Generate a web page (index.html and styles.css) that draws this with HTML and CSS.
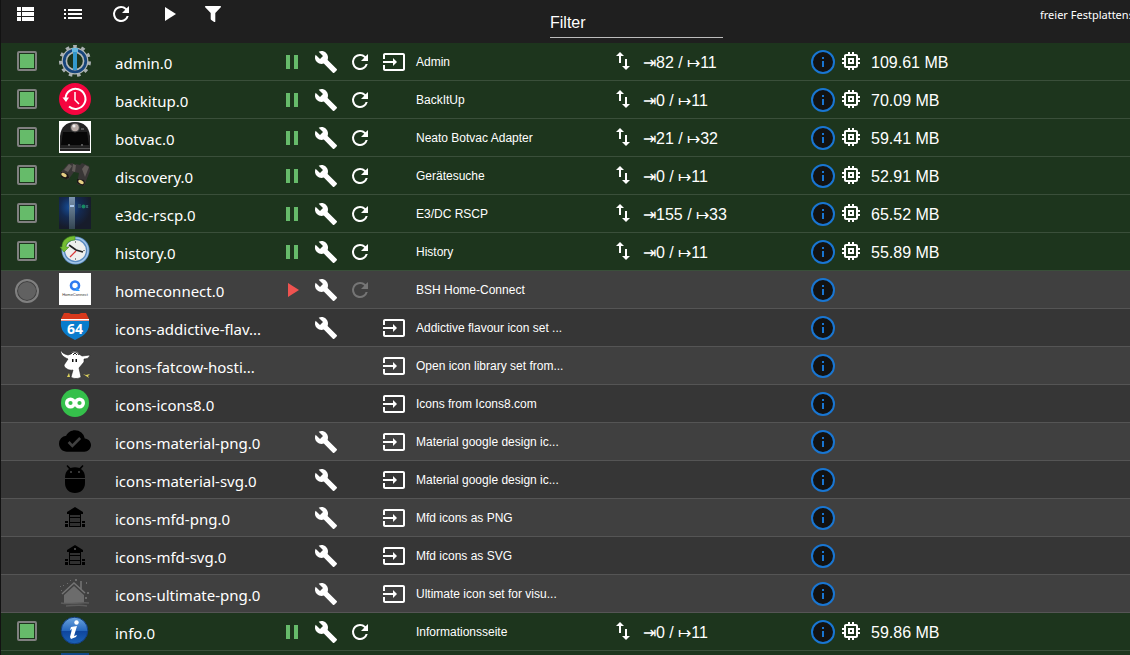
FILE: index.html
```html
<!DOCTYPE html>
<html lang="de">
<head>
  <meta charset="UTF-8">
  <meta name="viewport" content="width=device-width, initial-scale=1.0">
  <title>Instanzen</title>
  <link rel="stylesheet" href="styles.css">
</head>
<body>
  <!-- action icons -->
  <svg class="sprite" aria-hidden="true">
    <symbol id="view-list" viewBox="0 0 24 24"><path d="M4 14h4v-4H4zm0 5h4v-4H4zM4 9h4V5H4zm5 5h12v-4H9zm0 5h12v-4H9zM9 5v4h12V5z"/></symbol>
    <symbol id="list" viewBox="0 0 24 24"><path d="M3 13h2v-2H3zm0 4h2v-2H3zm0-8h2V7H3zm4 4h14v-2H7zm0 4h14v-2H7zM7 7v2h14V7z"/></symbol>
    <symbol id="refresh" viewBox="0 0 24 24"><path d="M17.65 6.35A7.96 7.96 0 0 0 12 4a8 8 0 1 0 7.73 10h-2.08A6 6 0 1 1 12 6c1.66 0 3.14.69 4.22 1.78L13 11h7V4z"/></symbol>
    <symbol id="play" viewBox="0 0 24 24"><path d="M8 5v14l11-7z"/></symbol>
    <symbol id="pause" viewBox="0 0 24 24"><path d="M6 19h4V5H6zm8-14v14h4V5z"/></symbol>
    <symbol id="filter" viewBox="0 0 24 24"><path d="M4.7 4h14.6c.7 0 1 .8.5 1.3L14.3 11v8.4c0 .6-.6.9-1.1.6l-2.900-2.100c-.4-.2-.6-.5-.6-.9v-6L4.200 5.300C3.700 4.800 4 4 4.700 4z"/></symbol>
    <symbol id="wrench" viewBox="0 0 24 24"><path d="m22.7 19-9.1-9.1c.9-2.300.4-5-1.500-6.900-2-2-5-2.400-7.400-1.300L9 6 6 9 1.600 4.700C.4 7.100.9 10.100 2.900 12.100c1.900 1.900 4.600 2.400 6.900 1.500l9.100 9.100c.4.4 1 .4 1.400 0l2.300-2.300c.5-.4.5-1.100.1-1.400z"/></symbol>
    <symbol id="enter" viewBox="0 0 24 24"><path d="M21 3.010H3c-1.100 0-2 .9-2 2V9h2V4.990h18v14.030H3V15H1v4.010c0 1.100.9 1.980 2 1.980h18c1.100 0 2-.88 2-1.980v-14c0-1.110-.9-2-2-2zM11 16l4-4-4-4v3H1v2h10z"/></symbol>
    <symbol id="updown" viewBox="0 0 24 24"><path d="M16 17.010V10h-2v7.010h-3L15 21l4-3.990zM9 3 5 6.990h3V14h2V6.990h3z"/></symbol>
    <symbol id="about" viewBox="0 0 24 24"><circle cx="12" cy="12" r="11" fill="#121212" stroke="#1976d2" stroke-width="2"/><path fill="#1976d2" d="M11 7h2v2h-2zm0 4h2v6h-2z"/></symbol>
    <symbol id="memory" viewBox="0 0 24 24"><path d="M15 9H9v6h6zm-2 4h-2v-2h2zm8-2V9h-2V7c0-1.100-.9-2-2-2h-2V3h-2v2h-2V3H9v2H7c-1.100 0-2 .9-2 2v2H3v2h2v2H3v2h2v2c0 1.100.9 2 2 2h2v2h2v-2h2v2h2v-2h2c1.100 0 2-.9 2-2v-2h2v-2h-2v-2zm-4 6H7V7h10z"/></symbol>
  </svg>

  <!-- adapter logos -->
  <svg class="defs" aria-hidden="true">
    <defs>
      <radialGradient id="glow" cx=".35" cy=".32" r=".65"><stop offset="0" stop-color="#164f9b"/><stop offset=".5" stop-color="#142a52"/><stop offset="1" stop-color="#171c2b"/></radialGradient>
      <linearGradient id="pillar" x2="0" y2="1"><stop offset="0" stop-color="#7a93ae"/><stop offset="1" stop-color="#344552"/></linearGradient>
      <linearGradient id="ball" x2="0" y2="1"><stop offset="0" stop-color="#6ba4df"/><stop offset=".5" stop-color="#2768bd"/><stop offset=".52" stop-color="#0e459e"/><stop offset="1" stop-color="#1c62b6"/></linearGradient>
    </defs>
    <symbol id="admin" viewBox="0 0 32 32">
      <circle cx="16" cy="16" r="14.5" fill="none" stroke="#aab0b2" stroke-width="3" stroke-dasharray="3.6 4.68" transform="rotate(-97 16 16)"/>
      <circle cx="16" cy="16" r="12.8" fill="#17457c" stroke="#b4b9ba" stroke-width="1.200"/>
      <circle cx="16" cy="16" r="8.600" fill="#1d351d" stroke="#b4b9ba" stroke-width="1.600"/>
      <path fill="#3399cc" d="M14 7h4v18h-4z"/><path fill="#65b9df" d="M13 3h6v4h-6z"/>
    </symbol>
    <symbol id="backitup" viewBox="0 0 32 32">
      <circle cx="16" cy="16" r="16" fill="#f5053f"/>
      <path fill="none" stroke="#fff" stroke-width="2" d="M6.500 15A10 10 0 1 1 10 23.500"/><path fill="none" stroke="#fff" stroke-width="1.500" d="M16 9v8l4 4"/><path fill="#fff" d="M3.500 14.500h6.500L7 19z"/>
    </symbol>
    <symbol id="botvac" viewBox="0 0 32 32">
      <path fill="#fff" d="M0 0h32v32H0z"/><path fill="#222" d="M1 30V15C2 6 7 1 16 1s14 5 15 14v15z"/>
      <path fill="#070707" d="M4 11h24l2 13H2z"/><circle cx="16" cy="6.500" r="5" fill="#444"/><circle cx="16" cy="6.500" r="3.800" fill="#b8aca6"/><circle cx="15" cy="5" r="1.500" fill="#eee"/>
      <path fill="#555" d="M1 27h30v1H1zM9 23h2v2H9zm13 0h2v2h-2zM22 7h3v2h-3z"/>
    </symbol>
    <symbol id="discovery" viewBox="0 0 32 32">
      <path fill="#393636" d="m1 14 8-9 5-1 2 5 1-4 4 1 2-2 7 3 1 5-6 15-7-2 2-11-5-1-6 8z"/>
      <path fill="#625c59" d="m5 11 5-6 3 2-4 6zm18-1 3-4 4 2-4 10zM14 5l3 1-1 7-3-1z"/>
      <path fill="#1a1717" d="m2 13 7 2 1 4-3 1-5-2zm16 7 7 1 1 3-2 3-6-3z"/>
      <ellipse cx="5" cy="16" rx="3" ry="1.800" fill="#e5cf84" transform="rotate(30 5 16)"/><ellipse cx="22" cy="23" rx="3" ry="1.800" fill="#e5cf84" transform="rotate(30 22 23)"/>
    </symbol>
    <symbol id="e3dc" viewBox="0 0 32 32">
      <path fill="url(#glow)" d="M0 0h32v32H0z"/><path fill="url(#pillar)" d="M10 0h6v32h-6z"/><path fill="#a9c8ee" d="M11 8h4v2h-4z"/>
      <path fill="none" stroke="#3a7074" d="M19 8h3m-3 2h3m5-2 2 3m0-3-2 3"/><circle cx="24.500" cy="9.500" r="2" fill="#168a62"/>
    </symbol>
    <symbol id="history" viewBox="0 0 32 32">
      <circle cx="16.500" cy="15.500" r="12.200" fill="#eeefed" stroke="#5a8bc0" stroke-width="3.600"/><circle cx="16.500" cy="15.500" r="12.500" fill="none" stroke="#a4c6e8" stroke-width="1.500"/>
      <path fill="#75bd32" stroke="#3f8b1e" stroke-width=".6" d="M16 1C8 1 3 5 3 12H1l4 5 5-5H7c0-4 4-7 9-7z"/>
      <path stroke="#888" d="M16.500 6v2m0 15v2M26 15.500h-2"/><path fill="none" stroke="#222" stroke-width="1.800" d="m10 10 7 5 7 2"/><path stroke="#d93636" stroke-width="1.200" d="m17 16-6 6"/>
    </symbol>
    <symbol id="homeconnect" viewBox="0 0 32 32">
      <path fill="#fff" d="M0 0h32v32H0z"/><circle cx="16" cy="12.500" r="4" fill="none" stroke="#2f7bf0" stroke-width="2.600"/><path fill="#2fa0ff" d="m17 14 4 4h-4z"/>
      <text x="16" y="23" font-size="4" text-anchor="middle" fill="#333">HomeConnect</text>
    </symbol>
    <symbol id="shield" viewBox="0 0 32 32">
      <path fill="#d8391c" d="M5 2h5l2 1h8l2-1h5l3 6v2H2V8z"/><path fill="#0a7ccc" d="M2 10h28c1 9-3 14-14 19C5 24 1 19 2 10z"/><path fill="#fff" d="M2 8h28v1.500H2z"/>
      <text x="16" y="23" font-family="Open Sans" font-size="14" font-weight="bold" text-anchor="middle" fill="#fff">64</text>
    </symbol>
    <symbol id="fatcow" viewBox="0 0 32 32">
      <path fill="#fff" stroke="#222" stroke-width=".6" d="M2 1c1 3 3 4 7 5l3-1c0-4 7-4 8 0l3 2 8-1c-1 3-3 4-6 4v3l-5 6 2 9c-2 2-8 2-10 0l2-7c-4 1-9-2-9-5l4-6C4 8 1 5 2 1z"/>
      <path fill="none" stroke="#222" d="M12 5c2-3 6-3 8 1m-6 0 2-2 2 2"/><path fill="#111" d="M13 10h1.500v3H13zm3.500 0H18v3h-1.500z"/>
      <path fill="#dfd45c" d="m24 25 3 1 4-1-2 2 1 2-3-2zM8 28l2-4 1 4z"/>
    </symbol>
    <symbol id="icons8" viewBox="0 0 32 32">
      <circle cx="16" cy="16" r="14" fill="#35c04b"/><g fill="#35c04b" stroke="#fff" stroke-width="3.400"><circle cx="11.500" cy="16" r="3.800"/><circle cx="20.500" cy="16" r="3.800"/></g>
    </symbol>
    <symbol id="cloud" viewBox="0 0 24 24"><path d="M19.350 10.040A7.490 7.490 0 0 0 12 4C9.110 4 6.600 5.640 5.350 8.040A5.994 5.994 0 0 0 0 14c0 3.310 2.690 6 6 6h13c2.760 0 5-2.240 5-5 0-2.640-2.050-4.780-4.650-4.960zM10 17l-3.500-3.500 1.410-1.410L10 14.170l5.180-5.170 1.410 1.410z"/></symbol>
    <symbol id="android" viewBox="0 0 32 32"><path fill-rule="evenodd" d="M6 15c0-4 1-7 4-9L7.500 3l1-1 3 3c3-1 6-1 9 0l3-3 1 1L22 6c3 2 4 5 4 9zm5-5h2V8h-2zm8 0h2V8h-2zM6 16h20v4c0 6-4 10-10 10S6 26 6 20z"/></symbol>
    <symbol id="mfd" viewBox="0 0 32 32">
      <path d="M16 6 8 11v2h16v-2zM10 13h12v13H10zM6 20h3v2H6zm0 3h3v3H6zm17-3h3v2h-3zm0 3h3v3h-3z"/>
      <path fill="#303030" d="M11 14h10v2H11zm0 3h10v4H11zm0 5h10v3H11z"/>
    </symbol>
    <symbol id="mfd-window" viewBox="0 0 32 32"><use href="#mfd"/><path fill="#444" d="M15 9h2v2h-2z"/></symbol>
    <symbol id="house" viewBox="0 0 32 32">
      <path fill="none" stroke="#757575" stroke-width="1.500" d="M3 17 15 6l11 10M22 4v8"/>
      <path fill="#6c6c6c" d="m15 9 10 9v8H5v-8zM16 2h2v2h-2zM11 3h1v1h-1zM8 6h1v1H8zM4 8h1v1H4zM1 9h1v1H1zm1 4h1v1H2zm25-8h1v2h-1zm1 10h2v2h-2zm-2 5h2v2h-2z"/>
      <path fill="none" stroke="#5c5c5c" stroke-width="1.500" d="M2 26c9 2 18-1 28 0M7 29c8 0 12-2 21 0"/>
    </symbol>
    <symbol id="info" viewBox="0 0 32 32">
      <circle cx="15.500" cy="15.500" r="13.300" fill="url(#ball)" stroke="#123d80"/><circle cx="17.500" cy="7.500" r="2.200" fill="#fff"/>
      <path fill="#fff" d="m12 12 6-1-3 10 3-1-1 2-5 2-1-2 2-8-2 1z"/>
    </symbol>
    <symbol id="blue" viewBox="0 0 32 32"><path fill="#114a86" d="M2 0h28v32H2z"/></symbol>
  </svg>

  <div class="page">
    <header class="toolbar">
      <div class="toolbar-buttons">
        <button type="button" aria-label="Tabelle"><svg class="icon"><use href="#view-list"/></svg></button>
        <button type="button" aria-label="Liste"><svg class="icon"><use href="#list"/></svg></button>
        <button type="button" aria-label="Aktualisieren"><svg class="icon"><use href="#refresh"/></svg></button>
        <button type="button" aria-label="Starten"><svg class="icon"><use href="#play"/></svg></button>
        <button type="button" class="narrow" aria-label="Filtern"><svg class="icon"><use href="#filter"/></svg></button>
      </div>
      <input class="filter" type="text" placeholder="Filter" aria-label="Filter">
      <span class="disk">freier Festplattenspeicher</span>
    </header>

    <table class="instances">
      <colgroup>
        <col class="col-status"><col class="col-logo"><col class="col-name"><col class="col-actions">
        <col class="col-title"><col class="col-events"><col>
      </colgroup>
      <tbody id="rows"></tbody>
    </table>
  </div>
  <script src="app.js"></script>
</body>
</html>
```

FILE: app.js
```javascript
// state: "on", "off" or "" for adapters without a process
const instances = [
  { state: "on", logo: "admin", name: "admin.0", actions: "wrench refresh enter", title: "Admin", events: "⇥82 / ↦11", memory: "109.61 MB" },
  { state: "on", logo: "backitup", name: "backitup.0", actions: "wrench refresh", title: "BackItUp", events: "⇥0 / ↦11", memory: "70.09 MB" },
  { state: "on", logo: "botvac", name: "botvac.0", actions: "wrench refresh", title: "Neato Botvac Adapter", events: "⇥21 / ↦32", memory: "59.41 MB" },
  { state: "on", logo: "discovery", name: "discovery.0", actions: "wrench refresh", title: "Gerätesuche", events: "⇥0 / ↦11", memory: "52.91 MB" },
  { state: "on", logo: "e3dc", name: "e3dc-rscp.0", actions: "wrench refresh", title: "E3/DC RSCP", events: "⇥155 / ↦33", memory: "65.52 MB" },
  { state: "on", logo: "history", name: "history.0", actions: "wrench refresh", title: "History", events: "⇥0 / ↦11", memory: "55.89 MB" },
  { state: "off", logo: "homeconnect", name: "homeconnect.0", actions: "wrench refresh", title: "BSH Home-Connect" },
  { state: "", logo: "shield", name: "icons-addictive-flav...", actions: "wrench enter", title: "Addictive flavour icon set ..." },
  { state: "", logo: "fatcow", name: "icons-fatcow-hosti...", actions: "enter", title: "Open icon library set from..." },
  { state: "", logo: "icons8", name: "icons-icons8.0", actions: "enter", title: "Icons from Icons8.com" },
  { state: "", logo: "cloud", name: "icons-material-png.0", actions: "wrench enter", title: "Material google design ic..." },
  { state: "", logo: "android", name: "icons-material-svg.0", actions: "wrench enter", title: "Material google design ic..." },
  { state: "", logo: "mfd", name: "icons-mfd-png.0", actions: "wrench enter", title: "Mfd icons as PNG" },
  { state: "", logo: "mfd-window", name: "icons-mfd-svg.0", actions: "wrench enter", title: "Mfd icons as SVG" },
  { state: "", logo: "house", name: "icons-ultimate-png.0", actions: "wrench enter", title: "Ultimate icon set for visu..." },
  { state: "on", logo: "info", name: "info.0", actions: "wrench refresh", title: "Informationsseite", events: "⇥0 / ↦11", memory: "59.86 MB" }
];

const labels = {
  play: "Starten",
  pause: "Anhalten",
  wrench: "Einstellungen",
  refresh: "Neustarten",
  enter: "Öffnen",
  about: "Info"
};

function icon(name) {
  return `<svg class="icon"><use href="#${name}"/></svg>`;
}

function button(name, disabled) {
  return `<button type="button" class="${name}" aria-label="${labels[name]}"${disabled ? " disabled" : ""}>${icon(name)}</button>`;
}

function row(item) {
  const off = item.state === "off";
  let actions = "";
  if (item.state) {
    actions += button(off ? "play" : "pause");
  }
  item.actions.split(" ").forEach(name => {
    actions += button(name, off && name === "refresh");
  });

  return `<tr class="${item.state === "on" ? "running" : ""}">
    <td class="status">${item.state ? `<span class="led ${item.state}"></span>` : ""}</td>
    <td class="logo"><svg><use href="#${item.logo}"/></svg></td>
    <td class="name">${item.name}</td>
    <td class="actions"><div>${actions}</div></td>
    <td class="title">${item.title}</td>
    <td class="events">${item.events ? `<div>${icon("updown")}<span>${item.events}</span></div>` : ""}</td>
    <td class="memory"><div>${button("about")}${item.memory ? `${icon("memory")}<span>${item.memory}</span>` : ""}</div></td>
  </tr>`;
}

// the next instance starts right at the lower edge of the list
const nextRow = `<tr class="running"><td></td><td class="logo"><svg><use href="#blue"/></svg></td><td colspan="5"></td></tr>`;

document.getElementById("rows").innerHTML = instances.map(row).join("") + nextRow;
```

FILE: styles.css
```css
* {
  box-sizing: border-box;
}

body {
  margin: 0;
  background-color: #121212;
  color: #fff;
  font-family: "Liberation Sans", Arial, sans-serif;
  font-size: 16px;
  line-height: 24px;
}

.page {
  height: 100vh;
  margin-left: 1px;
  overflow: hidden;
}

.sprite {
  display: none;
}

/* kept rendered so that the gradients stay usable */
.defs {
  position: absolute;
  width: 0;
  height: 0;
}

.icon {
  display: block;
  flex: none;
  width: 24px;
  height: 24px;
  fill: currentColor;
}

button {
  display: flex;
  justify-content: center;
  padding: 0;
  border: 0;
  background: none;
  color: inherit;
  cursor: pointer;
}

button:disabled {
  color: #757575;
  cursor: default;
}

/* toolbar */
.toolbar {
  display: grid;
  grid-template-columns: 549px 173px 1fr 90px;
  align-items: start;
  height: 43px;
  background-color: #1f1f1f;
}

.toolbar-buttons {
  display: flex;
  padding-top: 2px;
}

.toolbar-buttons button {
  width: 48px;
}

.toolbar-buttons .narrow {
  width: 40px;
}

.filter {
  width: 100%;
  height: 32px;
  margin-top: 6px;
  padding: 2px 0 0;
  border: 0;
  border-bottom: 1px solid #bcbcbc;
  outline: 0;
  background: none;
  color: #fff;
  font: inherit;
}

.filter::placeholder {
  color: #fff;
  opacity: 1;
}

.disk {
  grid-column: 4;
  padding-top: 3px;
  overflow: hidden;
  font-family: "Noto Sans", sans-serif;
  font-size: 11px;
  white-space: nowrap;
}

/* instance table */
.instances {
  width: 100%;
  table-layout: fixed;
  border-collapse: separate;
  border-spacing: 0;
}

.col-status {
  width: 52px;
}

.col-logo {
  width: 44px;
}

.col-name {
  width: 178px;
}

.col-actions {
  width: 136px;
}

.col-title,
.col-events {
  width: 200px;
}

tr {
  background-color: #363636;
}

tr:nth-child(odd) {
  background-color: #404040;
}

tr.running {
  background-color: #1d351d;
}

td {
  height: 38px;
  padding: 7px 0 0;
  border-bottom: 1px solid #555;
  vertical-align: top;
  white-space: nowrap;
}

.running td {
  border-bottom-color: #3a4f3a;
}

.led {
  display: block;
  width: 20px;
  height: 20px;
  margin: 1px auto 0;
  border: 2px solid #808080;
  border-radius: 2px;
  background-color: #66bb6a;
  box-shadow: inset 0 0 0 1px #1d351d;
}

.led.off {
  width: 24px;
  height: 24px;
  border-radius: 50%;
  background-color: #616161;
  box-shadow: inset 0 0 0 1px #404040;
}

.logo {
  padding-top: 2px;
}

.logo svg {
  display: block;
  width: 32px;
  height: 32px;
  margin: 0 auto;
}

.name {
  padding: 8px 0 0 18px;
  font-family: "Noto Sans", sans-serif;
  font-size: 15px;
}

.actions div {
  display: grid;
  grid-template-columns: repeat(4, 34px);
}

.pause {
  color: #66bb6a;
}

.play {
  color: #ef5350;
}

.wrench {
  grid-column: 2;
}

.refresh {
  grid-column: 3;
}

.enter {
  grid-column: 4;
}

.title {
  padding-left: 5px;
  font-size: 12px;
}

/* the small icons stand a little above the numbers */
.events,
.memory {
  padding-top: 6px;
}

.events div {
  display: flex;
  gap: 8px;
}

.memory div {
  display: flex;
}

.memory span,
.events span {
  padding-top: 2px;
}

.about {
  margin: 1px 4px 0 0;
}

.memory .icon + span {
  margin-left: 8px;
}
```
